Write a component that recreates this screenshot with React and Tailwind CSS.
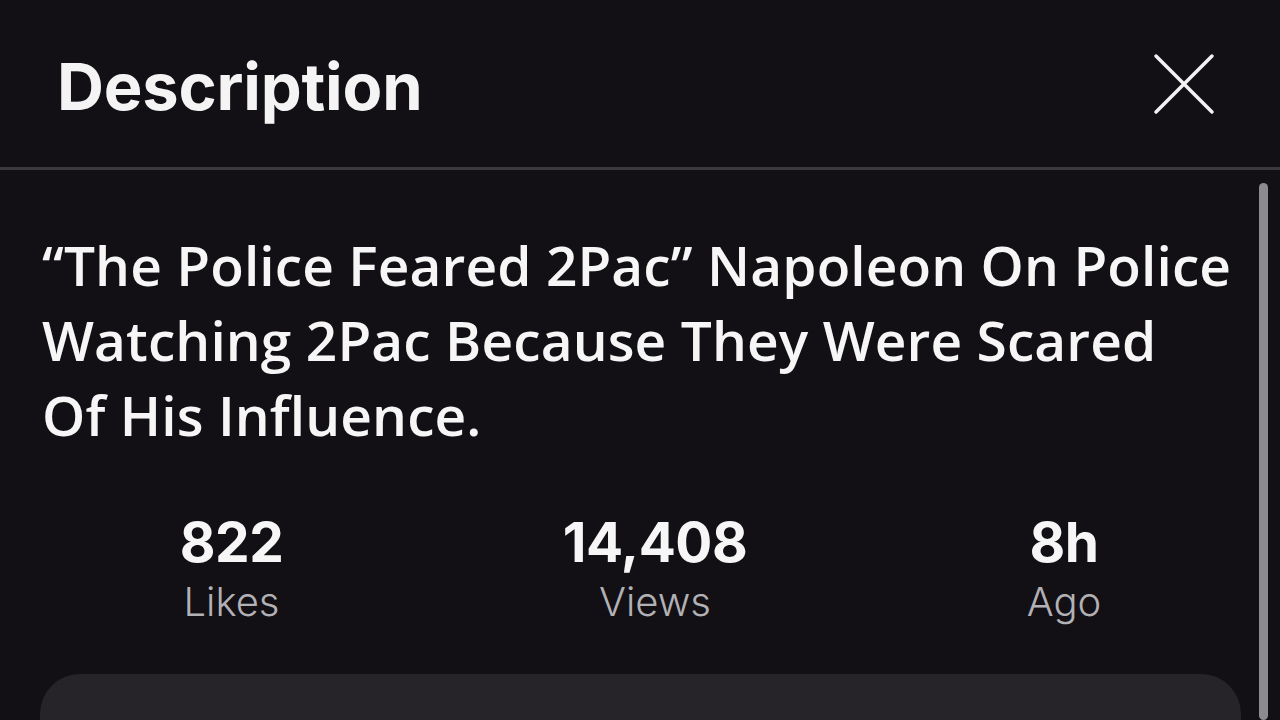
import React from "react";

const stats = [
  { value: "822", label: "Likes" },
  { value: "14,408", label: "Views" },
  { value: "8h", label: "Ago" },
];

const CloseIcon = () => (
  <svg width="62" height="62" viewBox="0 0 62 62" fill="none">
    <path
      d="M3 3 L59 59 M59 3 L3 59"
      stroke="#f2f2f2"
      strokeWidth="3.5"
      strokeLinecap="round"
    />
  </svg>
);

const App = () => {
  return (
    <div className="w-[1280px] h-[720px] overflow-hidden bg-[#121015] flex flex-col font-['Inter',sans-serif]">
      <header className="h-[167px] shrink-0 flex items-center justify-between pl-[57px] pr-[65px]">
        <h1 className="text-[65px] font-bold text-[#f4f4f4] tracking-[-0.2px] pt-[6px]">
          Description
        </h1>
        <CloseIcon />
      </header>
      <div className="h-[3px] shrink-0 bg-[#3a393d]" />

      <div className="flex flex-1 min-h-0">
        <main className="flex-1 pl-[40px] pr-[18px]">
          <h2 className="pt-[57px] pl-[2px] text-[55px] leading-[75px] font-semibold text-[#f6f6f6] font-['Open_Sans',sans-serif] tracking-[0.1px]">
            “The Police Feared 2Pac” Napoleon On Police
            <br />
            Watching 2Pac Because They Were Scared
            <br />
            Of His Influence.
          </h2>

          <div className="mt-[58px] flex justify-around">
            {stats.map((s) => (
              <div key={s.label} className="flex flex-col items-center">
                <span className="text-[55px] leading-[64px] font-bold text-[#f6f6f6] tracking-[-0.5px]">
                  {s.value}
                </span>
                <span className="mt-[6px] text-[40px] leading-[44px] font-light text-[#b2b1b5]">
                  {s.label}
                </span>
              </div>
            ))}
          </div>

          <div className="mt-[50px] h-[160px] rounded-[40px] bg-[#262428]" />
        </main>

        <div className="w-[9px] mt-[13px] mr-[12px] rounded-full bg-[#8c8b8f]" />
      </div>
    </div>
  );
};

export default App;
